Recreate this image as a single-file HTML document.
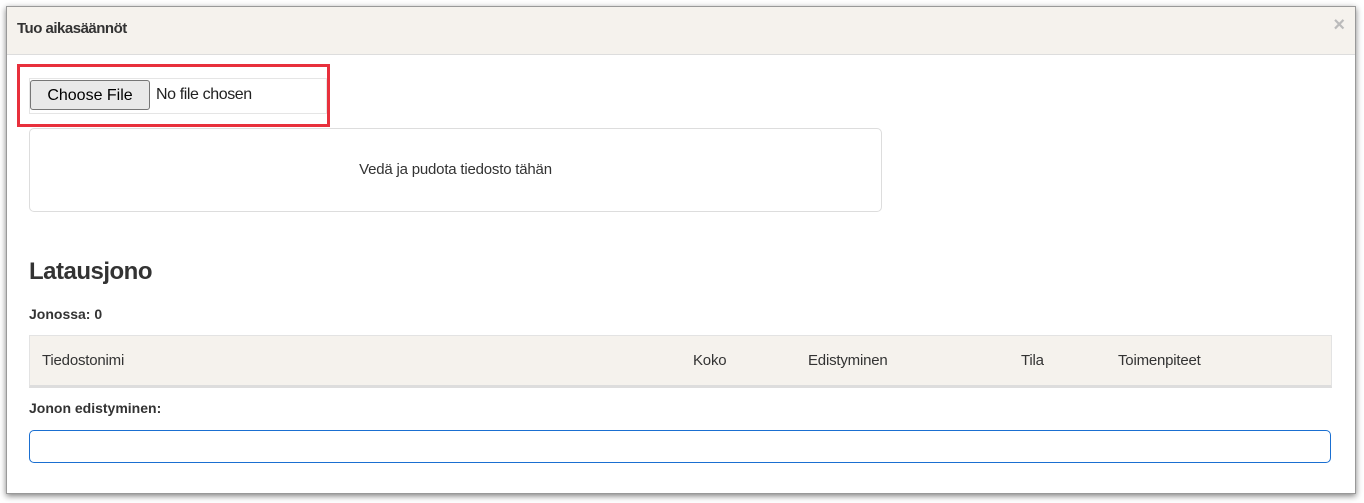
<!DOCTYPE html>
<html><head><style>
body{margin:0;width:1364px;height:503px;background:#fff;font-family:"Liberation Sans",sans-serif;color:#333;position:relative;overflow:hidden}
.dlg{position:absolute;left:6px;top:6px;width:1348px;height:486px;background:#fff;border:1px solid #999;box-shadow:0 2px 6px rgba(0,0,0,.5);}
.hd{position:absolute;left:0;top:0;right:0;height:47px;background:#f5f2ed;border-bottom:1px solid #ddd}
.hd b{position:absolute;left:10px;top:13px;font-size:15px;color:#333;letter-spacing:-0.5px}
.x{position:absolute;right:10px;top:7px;font-size:20px;color:#bbb;font-weight:bold}
.abs{position:absolute}
</style></head><body>
<div class="dlg">
<div class="hd"><b>Tuo aikasäännöt</b><span class="x">×</span></div>
</div>
<div class="abs" style="left:17px;top:64px;width:307px;height:57px;border:3px solid #e8303c"></div>
<div class="abs" style="left:29px;top:78px;width:296px;height:34px;border:1px solid #e5e5e5"></div>
<div class="abs" style="left:30px;top:80px;width:118px;height:28px;background:#e9e9e9;border:1px solid #767676;border-radius:3px;font-size:16px;color:#000;text-align:center;line-height:29px">Choose File</div>
<div class="abs" style="left:156px;top:86px;font-size:16px;color:#222;letter-spacing:-0.4px">No file chosen</div>
<div class="abs" style="left:29px;top:128px;width:851px;height:82px;border:1px solid #ddd;border-radius:5px;text-align:center;line-height:82px;font-size:15px;letter-spacing:-0.2px">Vedä ja pudota tiedosto tähän</div>
<div class="abs" style="left:29px;top:258px;font-size:24px;font-weight:bold;letter-spacing:-0.5px">Latausjono</div>
<div class="abs" style="left:29px;top:306px;font-size:14px;font-weight:bold">Jonossa: 0</div>
<div class="abs" style="left:29px;top:335px;width:1301px;height:49px;background:#f5f2ed;border:1px solid #e3e3e3;border-bottom:3px solid #ddd;font-size:15px;letter-spacing:-0.2px">
<span class="abs" style="left:12px;top:16px">Tiedostonimi</span>
<span class="abs" style="left:663px;top:16px">Koko</span>
<span class="abs" style="left:778px;top:16px">Edistyminen</span>
<span class="abs" style="left:991px;top:16px">Tila</span>
<span class="abs" style="left:1088px;top:16px">Toimenpiteet</span>
</div>
<div class="abs" style="left:29px;top:400px;font-size:14px;font-weight:bold">Jonon edistyminen:</div>
<div class="abs" style="left:29px;top:430px;width:1300px;height:31px;border:1px solid #1a6fd1;border-radius:5px"></div>
</body></html>
